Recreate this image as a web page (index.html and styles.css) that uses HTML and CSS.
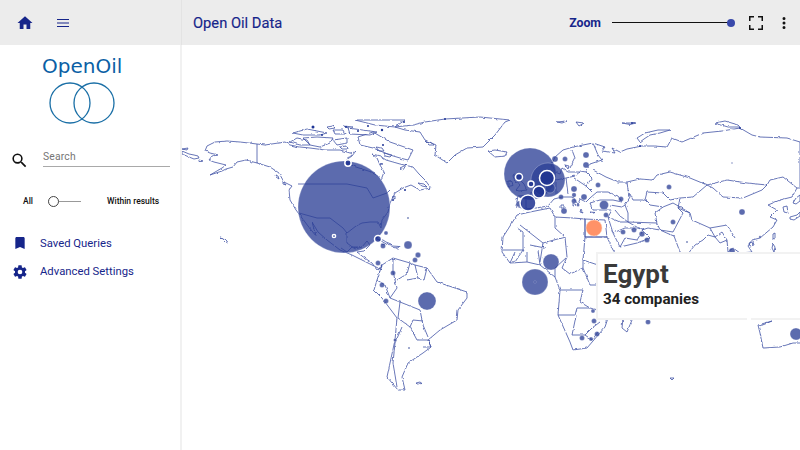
FILE: index.html
```html
<!DOCTYPE html>
<html lang="en">
<head>
<meta charset="utf-8">
<title>Open Oil Data</title>
<link rel="stylesheet" href="styles.css">
</head>
<body>
<div class="app">
  <header class="topbar">
    <div class="topbar-left">
      <svg class="icon home" viewBox="0 0 24 24"><path d="M10 20v-6h4v6h5v-8h3L12 3 2 12h3v8z"/></svg>
      <svg class="icon menu" viewBox="0 0 24 24"><path d="M3 18h18v-1.400H3zm0-5.300h18v-1.400H3zM3 6v1.400h18V6z"/></svg>
    </div>
    <div class="topbar-main">
      <h1 class="title">Open Oil Data</h1>
      <div class="zoom">
        <span class="zoom-label">Zoom</span>
        <div class="zoom-track"><span class="zoom-thumb"></span></div>
      </div>
      <svg class="icon fullscreen" viewBox="0 0 24 24"><path d="M7 14H5v5h5v-1.500H6.500V14zM5 10h1.500V6.500H10V5H5zm12.500 7.500H14V19h5v-5h-1.500zM14 5v1.500h3.500V10H19V5z"/></svg>
      <svg class="icon more" viewBox="0 0 24 24"><path d="M12 8a2 2 0 1 0 0-4 2 2 0 0 0 0 4zm0 2a2 2 0 1 0 0 4 2 2 0 0 0 0-4zm0 6a2 2 0 1 0 0 4 2 2 0 0 0 0-4z"/></svg>
    </div>
  </header>
  <div class="content">
    <aside class="sidebar">
      <div class="logo">
        <div class="logo-word">OpenOil</div>
        <svg class="logo-mark" viewBox="0 0 70 44"><circle cx="23" cy="22" r="20"/><circle cx="47" cy="22" r="20"/></svg>
      </div>
      <div class="search">
        <svg class="search-icon" viewBox="0 0 24 24"><path d="M15.500 14h-.79l-.28-.27A6.470 6.470 0 0 0 16 9.500 6.500 6.500 0 1 0 9.500 16c1.610 0 3.090-.59 4.230-1.570l.27.28v.79l5 4.990L20.490 19zm-6 0a4.500 4.500 0 1 1 0-9 4.500 4.500 0 0 1 0 9z"/></svg>
        <div class="search-field">Search</div>
      </div>
      <div class="scope">
        <span class="scope-all">All</span>
        <div class="switch"><span class="switch-thumb"></span></div>
        <span class="scope-within">Within results</span>
      </div>
      <nav class="nav">
        <div class="nav-item">
          <svg class="nav-icon" viewBox="0 0 24 24"><path d="M17 3H7c-1.100 0-2 .9-2 2v16l7-3 7 3V5c0-1.100-.9-2-2-2z"/></svg>
          <span>Saved Queries</span>
        </div>
        <div class="nav-item">
          <svg class="nav-icon" viewBox="0 0 24 24"><path d="M19.430 12.980c.04-.32.07-.64.07-.98s-.03-.66-.07-.98l2.110-1.650a.5.5 0 0 0 .12-.64l-2-3.460a.5.5 0 0 0-.61-.22l-2.490 1a7.300 7.300 0 0 0-1.690-.98l-.38-2.650A.49.49 0 0 0 14 2h-4a.49.49 0 0 0-.49.42l-.38 2.650c-.61.25-1.170.59-1.690.98l-2.490-1a.5.5 0 0 0-.61.22l-2 3.460a.49.49 0 0 0 .12.64l2.110 1.650c-.04.32-.07.65-.07.98s.03.66.07.98l-2.110 1.650a.5.5 0 0 0-.12.64l2 3.460c.12.22.39.3.61.22l2.490-1c.52.4 1.080.73 1.690.98l.38 2.650c.03.24.24.42.49.42h4c.25 0 .46-.18.49-.42l.38-2.650c.61-.25 1.170-.59 1.690-.98l2.490 1c.23.09.49 0 .61-.22l2-3.460a.5.5 0 0 0-.12-.64zM12 15.500a3.500 3.500 0 1 1 0-7 3.500 3.500 0 0 1 0 7z"/></svg>
          <span>Advanced Settings</span>
        </div>
      </nav>
    </aside>
    <main class="map">
      <svg class="world" viewBox="182 45 618 405">
        <defs>
          <filter id="rough" x="-2%" y="-2%" width="104%" height="104%">
            <feTurbulence type="fractalNoise" baseFrequency="0.22" numOctaves="2" seed="4" result="noise"/>
            <feDisplacementMap in="SourceGraphic" in2="noise" scale="2.600" xChannelSelector="R" yChannelSelector="G"/>
            <feGaussianBlur stdDeviation="0.25"/>
          </filter>
        </defs>
        <g class="land">
          <!-- North America -->
          <path d="M207 146L215 142 227 141 240 142 257 144 265 145 285 142 290 145 300 147 310 148 325 150 340 150 350 153 355 152 352 156 346 160 350 165 365 170 375 173 381 180 384 172 380 165 377 158 372 154 380 156 386 160 400 164 413 167 419 174 425 180 431 188 420 190 411 185 403 188 395 193 390 203 388 212 382 220 381 228 378 222 370 222 362 223 356 226 347 233 347 243 355 249 362 247 367 241 370 245 364 251 357 252 362 256 372 263 377 270 382 266 380 270 378 268 372 265 362 260 352 255 340 250 327 240 318 232 312 222 316 236 308 226 302 218 296 210 290 200 289 190 292 186 284 182 279 173 270 167 257 163 246 160 237 162 233 167 226 169 222 171 210 175 222 168 226 165 214 162 209 160 212 156 218 155 210 153 205 151 207 146Z"/>
          <path d="M283 181l3 4-3-1zM275 175l3 1 1 3-3-2z"/>
          <path d="M182 149l6-1-1 2zM182 151l7 3 5 1 4 1 1 2-5 1-5-2-7-3zM199 160l4 1-4 .5z"/>
          <path d="M220 237l2 .6 3 1.400 2 2 1 2-2-1-3-3z"/>
          <!-- Arctic -->
          <path d="M290 142L297 138 307 140 310 145 300 145Z"/>
          <path d="M293 133L307 129 317 131 327 133 320 135 303 135Z"/>
          <path d="M303 138L317 137 333 138 330 143 320 147 310 145Z"/>
          <path d="M333 130L343 130 345 134 335 134Z"/>
          <path d="M333 140L347 138 347 143 337 145Z"/>
          <path d="M358 137L373 132 390 142 413 150 408 160 400 158 390 155 373 148 360 145Z"/>
          <path d="M348 128L377 132 370 135 350 134Z"/>
          <path d="M355 120L383 120 405 120 395 127 375 125Z"/>
          <path d="M327 127l6-1 2 2-6 1zM344 126l9 1-3 1.500zM380 163l3 1-3 .5zM376 147l6 1 2 3-5 0zM384 153l8 2-2 2-5-1zM340 147l6-1 1 3-5 0z"/>
          <path d="M400 168l6-3-3 5zM418 183l6 1 3 3-5-1zM392 197l3-1 0 3z"/>
          <!-- Greenland, Iceland -->
          <path d="M413 125L425 122 445 119 480 117 510 120 505 122 495 135 483 147 467 148 455 155 447 163 435 155 436 145 425 140 420 132 405 130 395 127Z"/>
          <path d="M425 141l5 1 4 3-5 0zM488 151L495 150 507 152 505 156 495 157Z"/>
          <path d="M557 122l10-1-5 2zM576 122l8 1-5 3zM622 123h14l-6 1.500z"/>
          <!-- Caribbean -->
          <path d="M377 239l6 1 3 2 5 2 1 1-5-.5-5-3zM392 246l8 .5-1 1.500-7-.5zM381 244l4 .5-3 1z"/>
          <!-- Eurasia coast -->
          <path d="M555 157L563 150 573 147 593 143 605 147 602 151 615 153 612 148 620 152 627 149 642 146 654 146 667 147 672 138 682 142 703 133 722 131 740 128 752 135 760 137 787 138 800 142V188L797 188 792 197 780 200 768 205 777 210 770 217 777 220 773 227 760 238 752 240 748 246 752 252 740 253 733 248 728 252 727 240 720 243 715 237 708 235 703 240 695 245 687 255 680 252 674 236 669 234 660 230 648 228 642 230 650 238 637 243 620 247 613 233 608 217 612 210 608 210 593 210 590 203 600 200 613 200 622 202 618 196 608 192 597 192 590 198 586 202 580 199 578 204 572 197 562 197 554 199 548 206 536 208 524 209 516 206 518 196 530 195 536 186 548 180 556 180 566 178 575 176 580 172 568 172 562 168 560 174 555 172 552 164Z"/>
          <path d="M593 143L598 155 602 160 590 164 586 172 580 171M593 170L606 177 618 182 627 182M572 150L575 158 570 168M586 172L592 178 586 186 592 192M574 178L586 186M556 180L556 194M566 178L568 194M520 197L530 196M526 197L526 208"/>
          <path d="M513 176l5-3 3 2-1 5 4 4 3 6-8 1-3-1 4-5-5-4zM508 181l4 .5 1 4-5 1z"/>
          <path d="M565 165l4 1-1 3zM573 203l3 2-3 1zM590 212l5 .5-3 1zM561 205l3 0 0 3-3 0zM581 209l2 4-3-1z"/>
          <!-- Central Asia -->
          <path d="M627 182L640 179 653 180 657 175 670 172 690 178 707 185 693 197 680 198 670 200 663 193 647 192 645 200 633 200 628 190Z"/>
          <path d="M707 185L727 180 747 183 767 185 762 190 743 198 723 197 713 188Z"/>
          <path d="M767 185L770 180 783 177 797 188"/>
          <path d="M680 198L678 208 690 213 692 220 710 228 727 225 735 238M628 190L630 197 625 205 628 213 628 222 642 230M628 222L657 223 655 213 663 207 673 203 680 207 678 208 683 213 673 232 660 230 657 223M645 200L650 205 663 207M680 207L690 213M610 205L622 207 625 205M615 210L620 216 628 222M608 217L620 222 628 222M613 233L625 228 640 228M620 247L625 238 637 240 642 232M710 228L715 237 722 232 727 240"/>
          <path d="M783 207l4-1 1 7-4-1zM790 217l7-2 3-3v4l-6 4-4-1zM773 234l2-1 0 5-2 1zM749 243l4-1 1 3-4 1zM773 244l2 3-1 5-2-4zM800 195l-4 3-3 5 3 1 4-3zM637 138L645 133 658 130 670 130 660 133 650 135 644 139 640 142ZM715 123l10-2 10 3 5 3-12 0z"/>
          <!-- Africa -->
          <path d="M530 212L550 208 555 217 573 218 585 219 605 220 607 237 613 250 622 262 635 262 625 285 610 312 605 327 587 348 573 350 570 342 558 315 560 290 555 277 540 265 527 262 510 263 502 252 503 237 517 215Z"/>
          <path d="M585 219V237H607M517 228L523 232V250H503M520 225L543 243 565 237 555 228 555 217M565 237L567 257 562 268 570 274 583 268 583 260 585 237M543 243L540 262M523 250L515 262M530 245L545 248M567 257L555 268 555 277M583 260L598 265 610 262M583 268L590 285 605 285M560 290H575L583 290 580 302 590 308 598 310M558 315H575L577 308 590 308M576 316L572 335 585 335 592 328 600 322M585 335L592 340 598 332M598 280L600 300M510 263L515 252M527 262V252M540 265L538 250"/>
          <path d="M623 318L622 328 627 332 632 320 630 312Z"/>
          <!-- South America -->
          <path d="M382 265L393 258 410 263 415 265 427 268 437 282 467 292 467 298 458 310 457 320 440 330 428 340 431 347 423 353 408 363 402 377 405 390 398 390 387 377 390 363 395 340 397 318 382 298 374 290 377 280Z"/>
          <path d="M393 258L393 272 397 288 390 298 400 302 420 310 423 325 428 337M410 263L407 274 397 280M415 265L418 278 407 280M427 268L424 280 418 278M400 302L398 318 410 327 413 320 423 321M402 327L395 343 393 363 397 387M410 327L417 340 428 340M377 280L385 285 390 298M423 347L431 347 428 340"/>
          <path d="M416 383l4-1 2 1.500-5 .5zM670 378l4 0-2 2z"/>
          <!-- Australia -->
          <path d="M800 343L793 343 780 347 763 348 760 333 758 325 772 321 765 324 760 326"/>
        </g>
        <g class="borders">
          <path d="M257 144V163M298 184H347L367 188 373 198 387 193 390 190M299 213L317 218 330 218 343 228 347 233M341 248L347 252 352 247 358 247"/>
          <path d="M585 219V237H607"/>
        </g>
        <g class="specks">
          <circle cx="313" cy="127" r="1.500"/><circle cx="322" cy="135" r="1"/><circle cx="346" cy="127" r="1"/><circle cx="358" cy="131" r="1"/><circle cx="368" cy="126" r="1"/><circle cx="382" cy="130" r="1.200"/><circle cx="404" cy="122" r="1"/><circle cx="445" cy="119" r="1"/><circle cx="383" cy="145" r="1"/><circle cx="405" cy="190" r="1"/><circle cx="393" cy="200" r="1"/><circle cx="632" cy="123" r="1"/><circle cx="740" cy="128" r="1"/><circle cx="640" cy="146" r="1"/>
        </g>
        <g class="bubbles">
          <circle cx="344" cy="207" r="46"/>
          <circle cx="530" cy="174" r="26"/>
          <circle cx="548" cy="180" r="17"/>
          <circle cx="535" cy="282" r="13"/>
          <circle cx="551" cy="262" r="8"/>
          <circle cx="427" cy="301" r="9"/>
          <circle cx="604" cy="205" r="4.500"/>
          <circle cx="408" cy="245" r="4"/>
          <circle cx="796" cy="334" r="6"/>
          <circle cx="742" cy="212" r="3"/>
          <circle cx="732" cy="251" r="3"/>
          <circle cx="669" cy="187" r="2.500"/>
          <circle cx="673" cy="222" r="2.500"/>
          <circle cx="623" cy="232" r="2.500"/>
          <circle cx="634" cy="230" r="2.500"/>
          <circle cx="642" cy="234" r="2.800"/>
          <circle cx="647" cy="240" r="2.600"/>
          <circle cx="621" cy="199" r="2.500"/>
          <circle cx="606" cy="215" r="2.500"/>
          <circle cx="598" cy="185" r="2.500"/>
          <circle cx="586" cy="155" r="3"/>
          <circle cx="586" cy="165" r="3"/>
          <circle cx="555" cy="159" r="3"/>
          <circle cx="565" cy="159" r="2.500"/>
          <circle cx="574" cy="189" r="3"/>
          <circle cx="574" cy="195" r="2.200"/>
          <circle cx="574" cy="201" r="2.500"/>
          <circle cx="561" cy="197" r="2.500"/>
          <circle cx="584" cy="197" r="3"/>
          <circle cx="564" cy="211" r="3"/>
          <circle cx="578" cy="205" r="1.500"/>
          <circle cx="519" cy="204" r="3"/>
          <circle cx="550" cy="188" r="5"/>
          <circle cx="386" cy="301" r="2.500"/>
          <circle cx="382" cy="285" r="2.500"/>
          <circle cx="393" cy="273" r="2.500"/>
          <circle cx="378" cy="263" r="2.500"/>
          <circle cx="395" cy="340" r="1.500"/>
          <circle cx="409" cy="348" r="1"/>
          <circle cx="418" cy="255" r="2.700"/>
          <circle cx="415" cy="260" r="2.500"/>
          <circle cx="383" cy="246" r="2.500"/>
          <circle cx="386" cy="233" r="2"/>
          <circle cx="408" cy="218" r="1"/>
          <circle cx="582" cy="338" r="2.500"/>
          <circle cx="591" cy="339" r="2"/>
          <circle cx="597" cy="334" r="2.500"/>
          <circle cx="594" cy="321" r="2.500"/>
          <circle cx="593" cy="311" r="2"/>
          <circle cx="648" cy="322" r="2.500"/>
          <circle cx="732" cy="163" r="0.800"/>
          <circle cx="687" cy="242" r="1"/>
          <circle cx="760" cy="237" r="1.200"/>
          <circle cx="535" cy="282" r="1.200"/>
        </g>
        <g class="rings">
          <circle cx="348" cy="163" r="3.200"/>
          <circle cx="334" cy="236" r="1.600"/>
          <circle cx="378" cy="239" r="3.500"/>
          <circle cx="547" cy="178" r="7.500"/>
          <circle cx="519" cy="177" r="3.500"/>
          <circle cx="531" cy="184" r="3"/>
          <circle cx="539" cy="192" r="6"/>
          <circle cx="528" cy="203" r="8"/>
        </g>
        <circle class="active" cx="594" cy="228" r="8"/>
      </svg>
      <div class="tooltip">
        <div class="tooltip-name">Egypt</div>
        <div class="tooltip-count">34 companies</div>
      </div>
    </main>
  </div>
</div>
</body>
</html>
```
FILE: styles.css
```css
* { box-sizing: border-box; }
html, body { margin: 0; height: 100%; background: #fff; overflow: hidden; }
body { font-family: Roboto, "Liberation Sans", sans-serif; color: #16258a; }
.app { width: 800px; height: 450px; display: flex; flex-direction: column; }
.topbar { height: 45px; flex: none; display: flex; background: #ececec; }
.topbar-left { width: 182px; flex: none; display: flex; align-items: center; padding-left: 16px; gap: 21px; border-right: 1px solid #e3e3e3; }
.icon { fill: currentColor; display: block; flex: none; }
.home { width: 18px; height: 18px; }
.menu { width: 16px; height: 16px; }
.topbar-main { flex: 1; display: flex; align-items: center; padding-left: 11px; padding-right: 7px; }
.title { margin: 0; font-size: 14.700px; font-weight: 400; -webkit-text-stroke: .15px #16258a; }
.zoom { margin-left: auto; display: flex; align-items: center; }
.zoom-label { font-size: 12.300px; font-weight: 700; margin-right: 11px; }
.zoom-track { width: 119px; height: 1.500px; background: #111; position: relative; margin-right: 13px; }
.zoom-thumb { position: absolute; right: -4px; top: -3px; width: 8px; height: 8px; border-radius: 50%; background: #3949ab; }
.fullscreen { width: 24px; height: 24px; color: #111; margin-right: 7px; }
.more { width: 18px; height: 18px; color: #111; }
.content { flex: 1; display: flex; min-height: 0; }
.sidebar { width: 182px; flex: none; border-right: 2px solid #f1f1f1; display: flex; flex-direction: column; }
.logo { display: flex; flex-direction: column; align-items: flex-start; padding: 10px 0 0 42px; height: 99px; }
.logo-word { font-family: "DejaVu Sans", sans-serif; font-size: 20px; line-height: 22px; color: #0b5fa5; }
.logo-mark { width: 70px; height: 44px; margin: 4px 0 0 5px; fill: none; stroke: #1a6fa6; stroke-width: 1.300; }
.search { display: flex; align-items: flex-start; padding: 0 10px 0 10px; height: 52px; }
.search-icon { width: 19px; height: 19px; margin: 7px 14px 0 0; fill: #111; flex: none; }
.search-field { flex: 1; height: 23px; padding-top: 6px; font-size: 10.300px; line-height: 14px; color: #757575; border-bottom: 1px solid #a9a9a9; letter-spacing: .2px; }
.scope { display: flex; align-items: center; height: 10px; padding-left: 23px; color: #111; font-size: 8.500px; font-weight: 500; }
.scope-all { width: 25px; }
.switch { width: 33px; height: 1px; background: #999; position: relative; }
.switch-thumb { position: absolute; left: 0; top: -5px; width: 11px; height: 11px; border-radius: 50%; background: #fff; border: 1.500px solid #444; }
.scope-within { margin-left: 26px; }
.nav { display: flex; flex-direction: column; margin-top: 23px; padding-left: 12px; font-size: 11.300px; }
.nav-item { display: flex; align-items: center; height: 28.500px; gap: 12px; }
.nav-icon { width: 16px; height: 16px; fill: #16258a; flex: none; }
.map { flex: 1; position: relative; overflow: hidden; min-width: 0; }
.world { display: block; width: 618px; height: 405px; }
.land { fill: none; stroke: #4354a6; stroke-width: .8; stroke-linejoin: round; filter: url(#rough); }
.borders { fill: none; stroke: #4354a6; stroke-width: .8; }
.specks circle { fill: #1f3596; }
.bubbles circle { fill: #2b3f96; fill-opacity: .77; stroke: #fff; stroke-opacity: .5; stroke-width: .5; }
.rings circle { fill: #1f3290; fill-opacity: .85; stroke: #fff; stroke-width: 1.500; }
.active { fill: #ff9268; stroke: #ffd0bb; stroke-width: .5; }
.tooltip { position: absolute; left: 414px; top: 207px; width: 220px; height: 68px; background: #fff; border: 2px solid #f2f2f2; border-right: 0; padding: 5px 0 0 5px; color: #333; }
.tooltip::after { content: ""; position: absolute; left: 149px; bottom: -2px; width: 4px; height: 2px; background: #fff; }
.tooltip-name { font-size: 26px; line-height: 30px; font-weight: 700; color: #3a3a3a; }
.tooltip-count { font-size: 15.200px; line-height: 20px; font-weight: 700; color: #222; }
```
